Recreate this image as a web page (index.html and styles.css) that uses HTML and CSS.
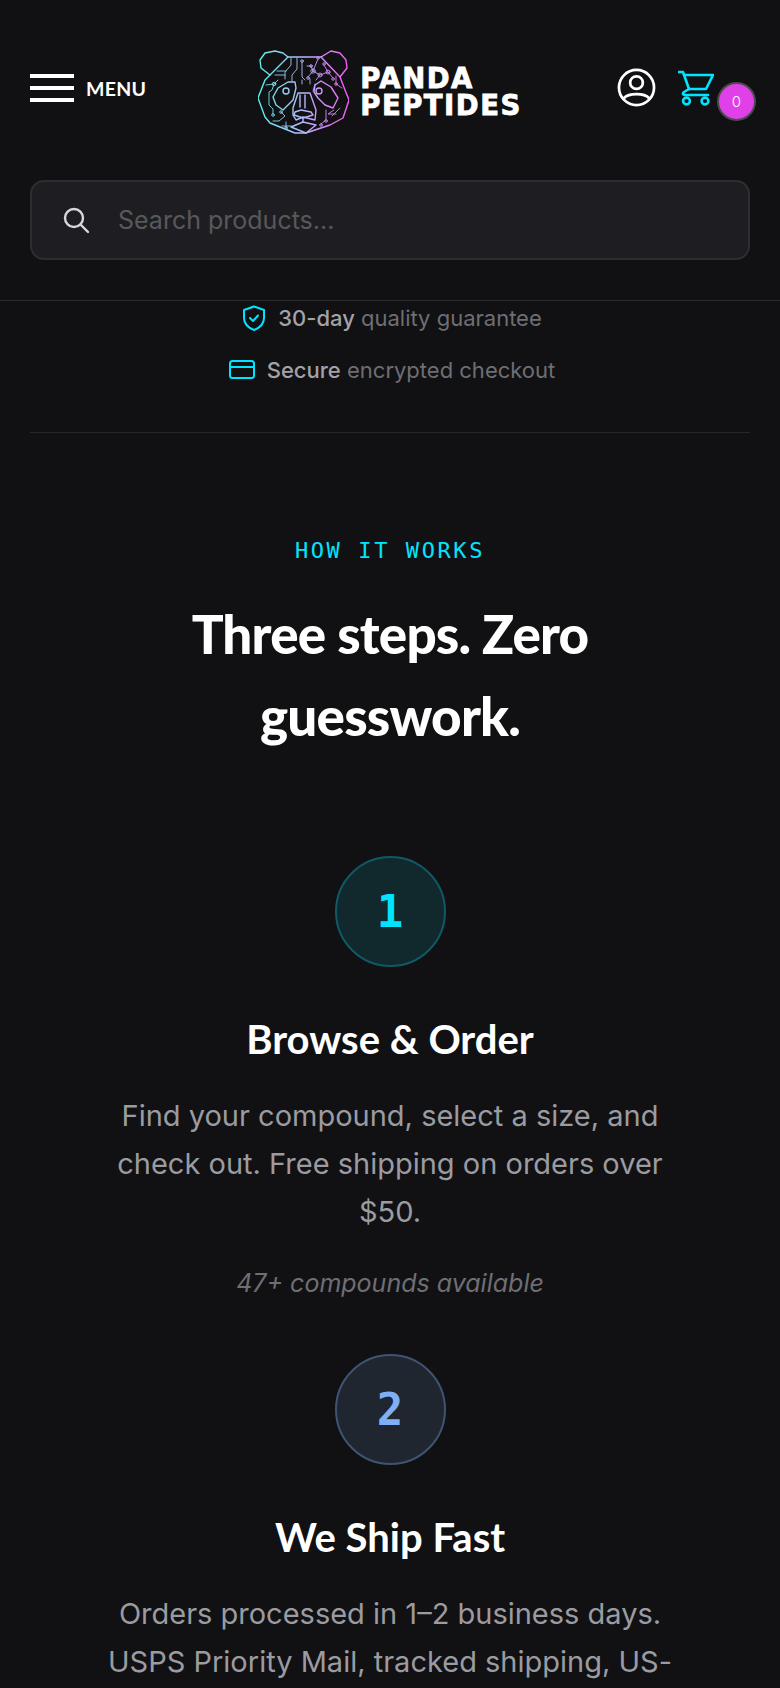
FILE: index.html
```html
<!DOCTYPE html>
<html lang="en">
<head>
    <meta charset="UTF-8">
    <meta name="viewport" content="width=device-width, initial-scale=1.0">
    <title>Panda Peptides</title>
    <link rel="stylesheet" href="styles.css">
</head>
<body>
    <header class="site-header">
        <div class="header-top">
            <button class="menu-button">
                <span class="menu-bars"><span></span><span></span><span></span></span>
                <span class="menu-label">MENU</span>
            </button>
            <a class="logo" href="#">
                <svg class="logo-mark" viewBox="0 0 91 84" fill="none" stroke="url(#pandaGrad)" stroke-width="1.400" stroke-linejoin="round" stroke-linecap="round">
                    <defs>
                        <linearGradient id="pandaGrad" gradientUnits="userSpaceOnUse" x1="0" y1="0" x2="91" y2="0">
                            <stop offset="0" stop-color="#5af0e8"/>
                            <stop offset="0.5" stop-color="#b4b8fa"/>
                            <stop offset="1" stop-color="#f658f4"/>
                        </linearGradient>
                    </defs>
                    <!-- ears -->
                    <path d="M12 25L3 18L2 10L7 3L17 1L25 3L30 7"/>
                    <path d="M63 7L73 1L82 3L88 10L89 18L82 27"/>
                    <!-- head outline -->
                    <path d="M30 7H63L82 27L87 40L91 50L85 68L72 75L48 83H37L12 73L7 67L0 48L7 30L12 25Z"/>
                    <!-- eye patches -->
                    <path d="M15 47L20 38L30 32H37L38 38L35 50L25 60L18 55Z"/>
                    <path d="M57 35L63 31L73 37L80 48L75 58L67 55L60 48L56 42Z"/>
                    <circle cx="28" cy="41" r="3"/>
                    <circle cx="61" cy="41" r="3"/>
                    <!-- muzzle, nose, chin -->
                    <path d="M40 43H52L58 60L57 70L45 67L38 70L35 65V58Z"/>
                    <path d="M37 62L43 60L53 62L55 65L45 68L36 65Z"/>
                    <path d="M42 45V57M47 45V58"/>
                    <path d="M45 68V72L33 77L48 83L58 75L45 72"/>
                    <!-- circuit traces -->
                    <g stroke-width="0.900">
                        <path d="M33 8V15L27 22V29M39 8V19L34 25V31"/>
                        <path d="M19 21H28M17 25H27"/>
                        <path d="M44 12V27L47 30M44 30V34"/>
                        <path d="M49 16H53L55 21L50 27M55 21L62 25L70 22L75 28M62 25L58 30M60 9L55 21M70 22L66 15"/>
                        <path d="M52 34V29M57 34L55 41"/>
                        <path d="M8 35L16 34L20 30M16 34L14 40L11 42V55L15 59V64"/>
                        <path d="M78 26V34M84 38L78 34"/>
                        <path d="M23 62L27 66L21 71H15M28 72V78M24 76H33"/>
                        <path d="M68 60V70L63 74M76 60L70 64H78M82 58L74 66"/>
                        <circle cx="44" cy="11" r="1.300"/>
                        <circle cx="53" cy="16" r="1.300"/>
                        <circle cx="55" cy="21" r="2.200"/>
                        <circle cx="62" cy="25" r="2"/>
                        <circle cx="70" cy="22" r="2"/>
                        <circle cx="75" cy="29" r="1.300"/>
                        <circle cx="66" cy="14" r="1.300"/>
                        <circle cx="60" cy="8" r="1.300"/>
                        <circle cx="50" cy="28" r="1.300"/>
                        <circle cx="16" cy="34" r="1.800"/>
                        <circle cx="15" cy="65" r="1.300"/>
                        <circle cx="78" cy="34" r="1.300"/>
                        <circle cx="68" cy="71" r="1.300"/>
                        <circle cx="63" cy="75" r="1.300"/>
                        <circle cx="28" cy="78" r="1.300"/>
                        <circle cx="23" cy="62" r="1.300"/>
                    </g>
                </svg>
                <span class="logo-text">PANDA<br>PEPTIDES</span>
            </a>
            <div class="header-icons">
                <svg class="icon-account" viewBox="0 0 40 40" fill="none" stroke="#fff" stroke-width="2.800">
                    <circle cx="20" cy="20" r="18"/>
                    <circle cx="20" cy="15" r="6.500"/>
                    <path d="M7 31C12 25.500 28 25.500 33 31"/>
                </svg>
                <div class="cart">
                    <svg class="icon-cart" viewBox="0 0 36 36" fill="none" stroke="#00e5ff" stroke-width="2.600" stroke-linecap="round" stroke-linejoin="round">
                        <path d="M1 2H5L11 19"/>
                        <path d="M6 5H35L28 19H11L6 22C4 24 5 25 7 25H30"/>
                        <circle cx="8.500" cy="31" r="3.400"/>
                        <circle cx="27" cy="31" r="3.400"/>
                    </svg>
                    <span class="cart-count">0</span>
                </div>
            </div>
        </div>
        <div class="search-box">
            <svg class="icon-search" viewBox="0 0 28 28" fill="none" stroke="#d8d8dc" stroke-width="2.400" stroke-linecap="round">
                <circle cx="12" cy="12" r="9"/>
                <path d="M19 19L26 26"/>
            </svg>
            <span class="search-placeholder">Search products...</span>
        </div>
    </header>

    <main class="content">
        <ul class="trust-list">
            <li>
                <svg class="icon-shield" viewBox="0 0 24 26" fill="none" stroke="#00e5ff" stroke-width="2" stroke-linecap="round" stroke-linejoin="round">
                    <path d="M12 1.500L22 5V13C22 19 17 23 12 25C7 23 2 19 2 13V5Z"/>
                    <path d="M8 13L11 16L16 10.500"/>
                </svg>
                <span><strong>30-day</strong> quality guarantee</span>
            </li>
            <li>
                <svg class="icon-card" viewBox="0 0 26 20" fill="none" stroke="#00e5ff" stroke-width="2" stroke-linejoin="round">
                    <rect x="1" y="1" width="24" height="17" rx="2.500"/>
                    <path d="M1 7H25"/>
                </svg>
                <span><strong>Secure</strong> encrypted checkout</span>
            </li>
        </ul>

        <section class="how-it-works">
            <div class="eyebrow">HOW IT WORKS</div>
            <h2>Three steps. Zero guesswork.</h2>

            <div class="step">
                <div class="step-number step-cyan">1</div>
                <h3>Browse &amp; Order</h3>
                <p>Find your compound, select a size, and check out. Free shipping on orders over $50.</p>
                <div class="step-note">47+ compounds available</div>
            </div>

            <div class="step">
                <div class="step-number step-blue">2</div>
                <h3>We Ship Fast</h3>
                <p>Orders processed in 1–2 business days. USPS Priority Mail, tracked shipping, US-based fulfillment.</p>
            </div>
        </section>
    </main>
</body>
</html>
```

FILE: styles.css
```css
* {
    box-sizing: border-box;
}

html {
    overflow: hidden;
}

body {
    margin: 0;
    height: 1688px;
    overflow: hidden;
    background-color: #111113;
    color: #fff;
    font-family: 'Inter', 'Noto Sans', sans-serif;
}

a {
    color: inherit;
    text-decoration: none;
}

.site-header {
    height: 301px;
    padding: 0 30px;
    border-bottom: 1px solid #2a2a2e;
}

.header-top {
    display: flex;
    align-items: center;
    justify-content: space-between;
    height: 180px;
}

.menu-button {
    display: flex;
    align-items: center;
    gap: 12px;
    width: 190px;
    margin-bottom: 4px;
    padding: 0;
    background: none;
    border: none;
    color: #fff;
}

.menu-bars {
    display: flex;
    flex-direction: column;
    gap: 8px;
    width: 44px;
}

.menu-bars span {
    height: 4px;
    background-color: #fff;
}

.menu-label {
    font-family: 'Lato', sans-serif;
    font-size: 19.500px;
    font-weight: 700;
    letter-spacing: 0.3px;
}

.logo {
    display: flex;
    align-items: center;
    gap: 11px;
    margin-top: 3px;
}

.logo-mark {
    width: 91px;
    height: 84px;
}

.logo-text {
    font-family: 'DejaVu Sans', sans-serif;
    font-size: 27.500px;
    font-weight: 700;
    line-height: 27px;
    letter-spacing: 1.500px;
    -webkit-text-stroke: 0.8px #fff;
}

.header-icons {
    display: flex;
    align-items: flex-start;
    justify-content: flex-end;
    gap: 22px;
    width: 190px;
    margin-bottom: 4px;
}

.icon-account {
    width: 39px;
    height: 39px;
}

.cart {
    position: relative;
    width: 72px;
    height: 40px;
    padding-top: 2px;
}

.icon-cart {
    display: block;
    width: 36px;
    height: 36px;
}

.cart-count {
    position: absolute;
    top: 14px;
    right: -6px;
    display: flex;
    align-items: center;
    justify-content: center;
    width: 39px;
    height: 39px;
    border-radius: 50%;
    border: 2px solid #4a4a4e;
    background-color: #e040e8;
    font-size: 15px;
    font-weight: 300;
}

.search-box {
    display: flex;
    align-items: center;
    gap: 28px;
    height: 80px;
    padding: 0 30px;
    background-color: #1e1e22;
    border: 2px solid #2e2e32;
    border-radius: 14px;
}

.icon-search {
    width: 28px;
    height: 28px;
    flex-shrink: 0;
}

.search-placeholder {
    font-size: 25px;
    color: #58585c;
}

.content {
    padding: 0 30px;
}

.trust-list {
    list-style: none;
    margin: -9px 0 0;
    padding: 0 0 36px 4px;
    border-bottom: 1px solid #26262a;
}

.trust-list li {
    display: flex;
    align-items: center;
    justify-content: center;
    gap: 12px;
    height: 52px;
    font-size: 22px;
    color: #6e6e74;
}

.trust-list strong {
    font-weight: 500;
    color: #a2a2a8;
}

.icon-shield {
    width: 24px;
    height: 26px;
}

.icon-card {
    width: 26px;
    height: 20px;
}

.how-it-works {
    text-align: center;
}

.eyebrow {
    margin-top: 105px;
    font-family: 'DejaVu Sans Mono', monospace;
    font-size: 22px;
    letter-spacing: 2.600px;
    color: #00e5ff;
}

.how-it-works h2 {
    margin: 30px auto 0;
    max-width: 500px;
    font-family: 'Lato', sans-serif;
    font-size: 53px;
    font-weight: 900;
    line-height: 82px;
    letter-spacing: -0.8px;
}

.step {
    padding: 0 70px;
}

.step-number {
    display: flex;
    align-items: center;
    justify-content: center;
    width: 111px;
    height: 111px;
    margin: 0 auto;
    border-radius: 50%;
    font-family: 'DejaVu Sans Mono', monospace;
    font-size: 44px;
    font-weight: 700;
}

.step-cyan {
    margin-top: 99px;
    color: #00e5ff;
    background-color: #11282d;
    border: 2px solid #0e5a66;
}

.step-blue {
    margin-top: 51px;
    color: #7fb0f5;
    background-color: #20262f;
    border: 2px solid #3f5472;
}

.step h3 {
    margin: 47px 0 0;
    font-family: 'Lato', sans-serif;
    font-size: 40px;
    font-weight: 700;
    line-height: 50px;
}

.step p {
    margin: 28px 0 0;
    font-size: 29px;
    font-weight: 400;
    line-height: 48px;
    color: #9b9ba1;
}

.step-note {
    margin-top: 27px;
    font-size: 25px;
    font-style: italic;
    line-height: 40px;
    color: #6e6e74;
}
```
